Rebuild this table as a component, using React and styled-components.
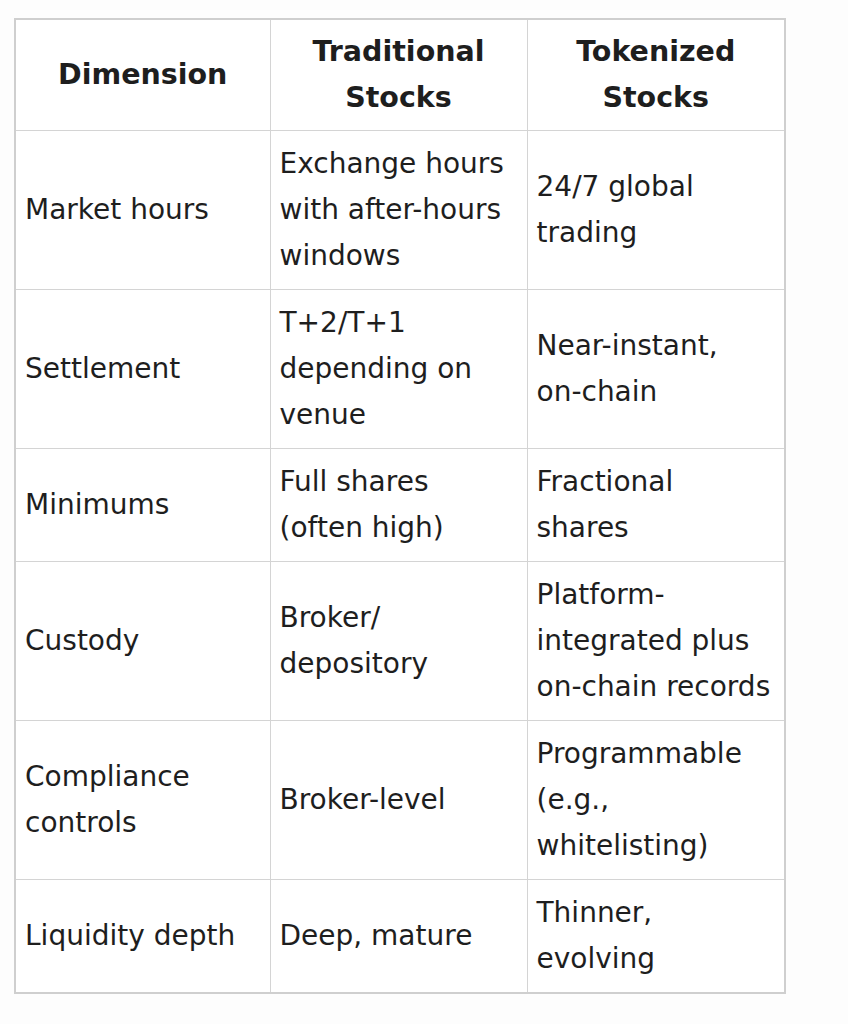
import styled, { createGlobalStyle } from "styled-components";

const GlobalStyle = createGlobalStyle`
  body {
    margin: 0;
    background: #fdfdfd;
  }
`;

const Page = styled.div`
  padding: 18px 0 0 14px;
  font-family: "DejaVu Sans", Verdana, sans-serif;
  color: #1e1e1e;
`;

const Table = styled.table`
  border-collapse: collapse;
  table-layout: fixed;
  width: 770px;
  background: #fff;
  border: 2px solid #cfcfcf;
`;

const HeadCell = styled.th`
  border: 1px solid #d4d4d4;
  font-size: 28.5px;
  font-weight: 700;
  line-height: 46px;
  text-align: center;
  padding: 9px 8px;
  height: 92px;
`;

const Cell = styled.td`
  border: 1px solid #d4d4d4;
  font-size: 28px;
  line-height: 46px;
  padding: 10px 8px 10px 9px;
  white-space: nowrap;
  vertical-align: middle;
  height: ${(p) => p.$h}px;
`;

const rows = [
  ["Market hours", ["Exchange hours", "with after-hours", "windows"], ["24/7 global", "trading"], 3],
  ["Settlement", ["T+2/T+1", "depending on", "venue"], ["Near-instant,", "on-chain"], 3],
  ["Minimums", ["Full shares", "(often high)"], ["Fractional", "shares"], 2],
  ["Custody", ["Broker/", "depository"], ["Platform-", "integrated plus", "on-chain records"], 3],
  ["Compliance controls", ["Broker-level"], ["Programmable", "(e.g.,", "whitelisting)"], 3],
  ["Liquidity depth", ["Deep, mature"], ["Thinner,", "evolving"], 2],
];

const Lines = ({ lines }) =>
  lines.map((l, i) => (
    <span key={i}>
      {l}
      {i < lines.length - 1 && <br />}
    </span>
  ));

const App = () => (
  <Page>
    <GlobalStyle />
    <Table>
      <colgroup>
        <col style={{ width: 255 }} />
        <col style={{ width: 257 }} />
        <col style={{ width: 258 }} />
      </colgroup>
      <thead>
        <tr>
          <HeadCell>Dimension</HeadCell>
          <HeadCell>
            Traditional
            <br />
            Stocks
          </HeadCell>
          <HeadCell>
            Tokenized
            <br />
            Stocks
          </HeadCell>
        </tr>
      </thead>
      <tbody>
        {rows.map(([dim, trad, tok, n]) => (
          <tr key={dim}>
            <Cell $h={n * 46}>
              {dim === "Compliance controls" ? <Lines lines={["Compliance", "controls"]} /> : dim}
            </Cell>
            <Cell $h={n * 46}>
              <Lines lines={trad} />
            </Cell>
            <Cell $h={n * 46}>
              <Lines lines={tok} />
            </Cell>
          </tr>
        ))}
      </tbody>
    </Table>
  </Page>
);

export default App;
